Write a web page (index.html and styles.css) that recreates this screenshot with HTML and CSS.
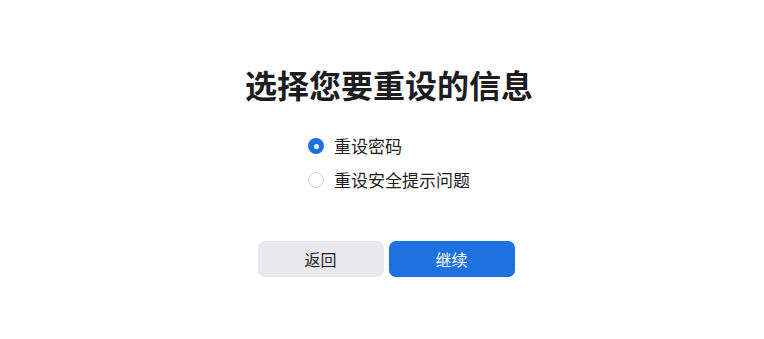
FILE: index.html
```html
<!DOCTYPE html>
<html lang="zh">
<head>
<meta charset="utf-8">
<link rel="stylesheet" href="styles.css">
<title>重设</title>
</head>
<body>
<main class="page">
  <h1 class="title">选择您要重设的信息</h1>
  <div class="options">
    <label class="option">
      <span class="radio checked"></span>
      <span class="label">重设密码</span>
    </label>
    <label class="option">
      <span class="radio"></span>
      <span class="label">重设安全提示问题</span>
    </label>
  </div>
  <div class="actions">
    <button class="btn secondary">返回</button>
    <button class="btn primary">继续</button>
  </div>
</main>
</body>
</html>
```
FILE: styles.css
```css
html, body {
  margin: 0;
  padding: 0;
  background: #ffffff;
}
body {
  font-family: "Noto Sans CJK SC", "Noto Sans", sans-serif;
  color: #1d1d1f;
}
.page {
  display: flex;
  flex-direction: column;
  align-items: center;
  padding: 64px 0 0 8px;
}
.title {
  margin: 0;
  padding-left: 6px;
  font-size: 32px;
  line-height: 40px;
  font-weight: 700;
  color: #1d1d1f;
}
.options {
  margin-top: 25px;
  margin-left: 6px;
  display: flex;
  flex-direction: column;
  align-items: flex-start;
}
.option {
  display: flex;
  align-items: center;
  height: 34px;
  gap: 10px;
  font-size: 17px;
  color: #1d1d1f;
}
.radio {
  box-sizing: border-box;
  width: 16px;
  height: 16px;
  border-radius: 50%;
  border: 1px solid #cfcfd4;
  background: #fff;
  display: flex;
  align-items: center;
  justify-content: center;
}
.radio.checked {
  border: none;
  background: #1d72e0;
}
.radio.checked::after {
  content: "";
  width: 5px;
  height: 5px;
  border-radius: 50%;
  background: #fff;
}
.label {
  line-height: 20px;
}
.actions {
  margin-top: 44px;
  display: flex;
  gap: 5px;
}
.btn {
  width: 126px;
  height: 36px;
  border: none;
  border-radius: 7px;
  font-family: "Noto Sans CJK SC", "Noto Sans", sans-serif;
  font-size: 16px;
  padding: 0;
}
.secondary {
  background: #e8e8ed;
  color: #1d1d1f;
}
.primary {
  background: #1d72e0;
  color: #ffffff;
}
```
